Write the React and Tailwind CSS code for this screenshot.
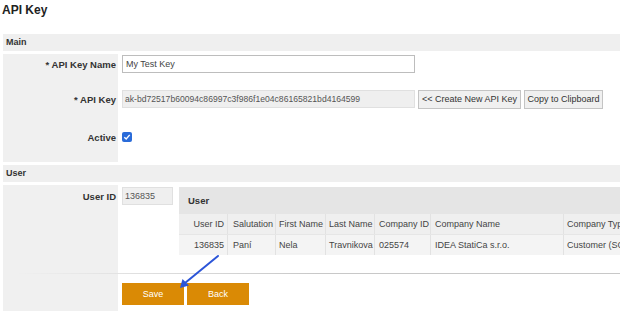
import React from "react";

const columns = [
  { title: "User ID", value: "136835", width: "w-[49px]", align: "justify-end pr-[3px]" },
  { title: "Salutation", value: "Paní", width: "w-[48px]", align: "pl-[5px]" },
  { title: "First Name", value: "Nela", width: "w-[50px]", align: "pl-[3px]" },
  { title: "Last Name", value: "Travnikova", width: "w-[49px]", align: "pl-[3px]" },
  { title: "Company ID", value: "025574", width: "w-[56px]", align: "pl-[4px]" },
  { title: "Company Name", value: "IDEA StatiCa s.r.o.", width: "w-[133px]", align: "pl-[4px]" },
  { title: "Company Type", value: "Customer (SCS)", width: "w-[80px]", align: "pl-[3px]" },
];

function Label({ children, className = "" }) {
  return (
    <div className={`w-[115px] shrink-0 bg-[#f0f0f0] flex justify-end pr-[2px] font-bold text-[#333] ${className}`}>
      {children}
    </div>
  );
}

function SectionBar({ title }) {
  return (
    <div className="h-[17px] bg-[#efefef] flex items-center pl-[3px] font-bold text-[#333]">
      {title}
    </div>
  );
}

function UserTable() {
  return (
    <div className="flex-1 overflow-hidden">
      <div className="h-[27px] bg-[#e5e5e5] flex items-center pl-[9px] font-bold text-[#333] text-[9.5px]">
        User
      </div>
      <div className="flex w-[480px] h-[20px] bg-[#efefef]">
        {columns.map((col) => (
          <div
            key={col.title}
            className={`${col.width} shrink-0 flex items-center border-r border-[#e2e2e2] whitespace-nowrap ${col.align}`}
          >
            {col.title}
          </div>
        ))}
      </div>
      <div className="flex w-[480px] h-[21px] bg-[#f4f4f4] border-t border-[#e6e6e6]">
        {columns.map((col) => (
          <div
            key={col.title}
            className={`${col.width} shrink-0 flex items-center border-r border-[#e2e2e2] whitespace-nowrap ${col.align}`}
          >
            {col.value}
          </div>
        ))}
      </div>
    </div>
  );
}

export default function App() {
  return (
    <div className="relative w-[624px] h-[311px] overflow-hidden bg-white text-[9px] leading-[11px] text-[#444] font-['Liberation_Sans',Arial,sans-serif]">
      <div className="h-[34px] pl-[2px] pt-[3px] text-[12px] leading-[14px] font-bold text-[#222]">
        API Key
      </div>

      <div className="ml-[3px] w-[617px]">
        <SectionBar title="Main" />

        <div className="mt-[3px]">
          {/* name */}
          <div className="flex h-[27px]">
            <Label className="pt-[1px]">
              <div className="h-[18px] flex items-center text-[9.5px]">* API Key Name</div>
            </Label>
            <div className="pl-[4px] pt-[1px]">
              <div className="w-[293px] h-[18px] border border-[#bdbdbd] bg-white flex items-center pl-[3px] text-[#444]">
                My Test Key
              </div>
            </div>
          </div>

          {/* key */}
          <div className="flex h-[37px]">
            <Label className="pt-[9px]">
              <div className="h-[18px] flex items-center text-[9.5px]">* API Key</div>
            </Label>
            <div className="pl-[4px] pt-[9px] flex gap-[3px]">
              <div className="w-[293px] h-[18px] border border-[#e0e0e0] bg-[#efefef] flex items-center pl-[2px] text-[#555] text-[8.6px]">
                ak-bd72517b60094c86997c3f986f1e04c86165821bd4164599
              </div>
              <button className="h-[19px] w-[103px] border border-[#c4c4c4] bg-[#f0f0f0] text-[#333] text-[9px]">
                &lt;&lt; Create New API Key
              </button>
              <button className="h-[19px] w-[79px] border border-[#c4c4c4] bg-[#f0f0f0] text-[#333] text-[9px]">
                Copy to Clipboard
              </button>
            </div>
          </div>

          {/* active */}
          <div className="flex h-[44px]">
            <Label className="pt-[10px]">
              <div className="h-[18px] flex items-center text-[9.5px]">Active</div>
            </Label>
            <div className="pl-[4px] pt-[14px]">
              <span className="w-[10px] h-[10px] rounded-[2px] bg-[#2a6bd9] flex items-center justify-center">
                <svg width="8" height="8" viewBox="0 0 8 8">
                  <path d="M1.3 4.2 L3.2 6 L6.7 1.9" fill="none" stroke="white" strokeWidth="1.4" />
                </svg>
              </span>
            </div>
          </div>
        </div>

        <div className="mt-[3px]">
          <SectionBar title="User" />
        </div>

        <div className="mt-[3px] flex h-[130px]">
          <Label className="pt-[2px]">
            <div className="h-[18px] flex items-center text-[9.5px]">User ID</div>
          </Label>
          <div className="flex-1 min-w-0 pl-[4px] pt-[2px]">
            <div className="flex gap-[6px]">
              <div className="w-[51px] h-[18px] shrink-0 border border-[#e0e0e0] bg-[#efefef] flex items-center pl-[2px] text-[#555]">
                136835
              </div>
              <UserTable />
            </div>
            <div className="mt-[18px] -ml-[107px] h-[1px] bg-gradient-to-r from-[#f0f0f0] via-[#c8c8c8] to-[#c8c8c8]" />
            <div className="mt-[9px] flex gap-[3px]">
              <button className="w-[62px] h-[22px] bg-[#da8a05] text-white text-[9px]">Save</button>
              <button className="w-[62px] h-[22px] bg-[#da8a05] text-white text-[9px]">Back</button>
            </div>
          </div>
        </div>
      </div>

      <svg className="absolute left-0 top-0 pointer-events-none" width="624" height="311">
        <line x1="218" y1="256" x2="185" y2="283" stroke="#2c55d8" strokeWidth="2" strokeLinecap="round" />
        <path d="M180 288 L182.5 279 L189 285.5 Z" fill="#2c55d8" />
      </svg>
    </div>
  );
}
